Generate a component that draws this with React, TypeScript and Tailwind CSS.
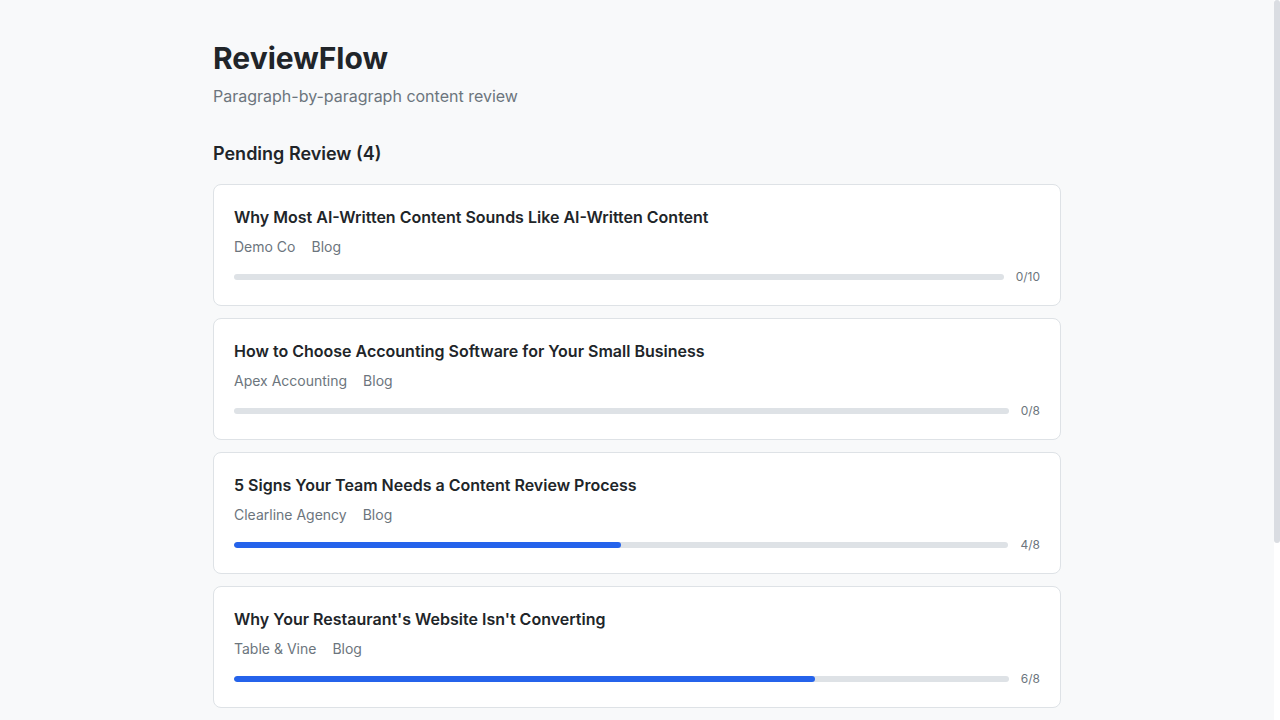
import React from "react";

type Item = { title: string; client: string; type: string; done: number; total: number };

const items: Item[] = [
  { title: "Why Most AI-Written Content Sounds Like AI-Written Content", client: "Demo Co", type: "Blog", done: 0, total: 10 },
  { title: "How to Choose Accounting Software for Your Small Business", client: "Apex Accounting", type: "Blog", done: 0, total: 8 },
  { title: "5 Signs Your Team Needs a Content Review Process", client: "Clearline Agency", type: "Blog", done: 4, total: 8 },
  { title: "Why Your Restaurant's Website Isn't Converting", client: "Table & Vine", type: "Blog", done: 6, total: 8 },
];

function Card({ item }: { item: Item }) {
  const pct = item.total ? (item.done / item.total) * 100 : 0;
  return (
    <div className="bg-white border border-[#dee2e6] rounded-lg p-5">
      <h3 className="text-base leading-6 font-semibold text-[#212529]">{item.title}</h3>
      <div className="mt-2 flex gap-4 text-sm leading-5 text-[#6c757d]">
        <span>{item.client}</span>
        <span>{item.type}</span>
      </div>
      <div className="mt-3 flex items-center gap-3">
        <div className="flex-1 h-1.5 rounded-full bg-[#dee2e6] overflow-hidden">
          <div className="h-full rounded-full bg-[#2563eb]" style={{ width: `${pct}%` }} />
        </div>
        <span className="text-xs leading-4 text-[#6c757d]">
          {item.done}/{item.total}
        </span>
      </div>
    </div>
  );
}

export default function App() {
  return (
    <div className="h-screen flex bg-[#f8f9fa]" style={{ fontFamily: "Inter, 'Noto Sans', sans-serif" }}>
      <main className="flex-1 min-w-0 overflow-y-auto">
        <div className="max-w-4xl mx-auto px-6 pt-10 pb-[247px]">
          <header className="mb-8">
            <h1 className="text-3xl leading-9 font-bold text-[#212529]">ReviewFlow</h1>
            <p className="mt-2 text-base leading-6 text-[#6c757d]">Paragraph-by-paragraph content review</p>
          </header>
          <h2 className="text-lg leading-7 font-semibold text-[#212529] mb-4">Pending Review (4)</h2>
          <div className="flex flex-col gap-3">
            {items.map((it) => (
              <Card key={it.title} item={it} />
            ))}
          </div>
        </div>
      </main>
      <div className="w-1.5 shrink-0 bg-white" aria-hidden="true">
        <div className="h-[543px] rounded-full bg-[#dadde2]" />
      </div>
    </div>
  );
}
